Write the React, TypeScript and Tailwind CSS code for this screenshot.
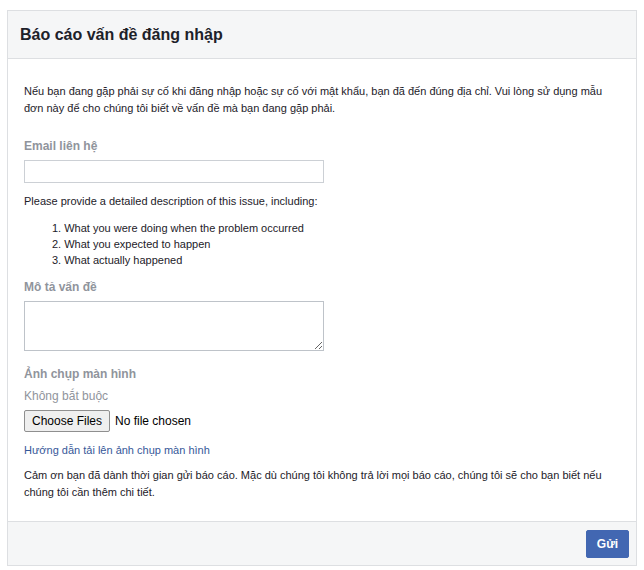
export default function App() {
  return (
    <div className="min-h-[570px] bg-white pt-[10px] pl-[7px] font-['Liberation_Sans',Arial,sans-serif] text-[#1d2129]">
      <div className="w-[630px] border border-[#dddfe2] bg-white">
        <div className="relative flex h-[48px] items-center border-b border-[#dddfe2] bg-[#f5f6f7] pl-[12px]">
          <h2 className="text-[16px] font-bold leading-5 text-[#1d2129]">Báo cáo vấn đề đăng nhập</h2>
        </div>

        <div className="px-[16px] pt-[24px] pb-[20px] text-[11px] leading-[17px]">
          <p>
            Nếu bạn đang gặp phải sự cố khi đăng nhập hoặc sự cố với mật khẩu, bạn đã đến đúng địa chỉ. Vui lòng sử dụng mẫu
            <br />
            đơn này để cho chúng tôi biết về vấn đề mà bạn đang gặp phải.
          </p>

          <div className="mt-[21px] text-[12px] font-bold leading-[17px] text-[#90949c]">Email liên hệ</div>
          <input className="mt-[5px] block h-[23px] w-[300px] border border-[#ccd0d5] bg-white px-1 outline-none" />

          <p className="mt-[10px]">Please provide a detailed description of this issue, including:</p>
          <ol className="mt-[10px] pl-[28px] leading-[16px]">
            <li>1. What you were doing when the problem occurred</li>
            <li>2. What you expected to happen</li>
            <li>3. What actually happened</li>
          </ol>

          <div className="mt-[11px] text-[12px] font-bold leading-[17px] text-[#90949c]">Mô tả vấn đề</div>
          <textarea className="mt-[5px] block h-[50px] w-[300px] border border-[#bec3c9] bg-white outline-none" />

          <div className="mt-[15px] text-[12px] font-bold leading-[17px] text-[#90949c]">Ảnh chụp màn hình</div>
          <div className="mt-[5px] text-[12px] leading-[17px] text-[#90949c]">Không bắt buộc</div>
          <div className="mt-[5px] flex items-center">
            <button className="h-[22px] w-[86px] rounded-[2px] border border-[#8f8f8f] bg-[#efefef] text-[12px] leading-none text-black">
              Choose Files
            </button>
            <span className="ml-[5px] text-[12px] text-black">No file chosen</span>
          </div>

          <a className="mt-[10px] block leading-[17px] text-[#365899]">Hướng dẫn tải lên ảnh chụp màn hình</a>

          <p className="mt-[8px]">
            Cảm ơn bạn đã dành thời gian gửi báo cáo. Mặc dù chúng tôi không trả lời mọi báo cáo, chúng tôi sẽ cho bạn biết nếu
            <br />
            chúng tôi cần thêm chi tiết.
          </p>
        </div>

        <div className="flex h-[44px] items-center justify-end border-t border-[#dddfe2] bg-[#f5f6f7] pr-[7px]">
          <button className="h-[28px] w-[43px] rounded-[2px] border border-[#4267b2] bg-[#4267b2] text-[12px] font-bold text-white">
            Gửi
          </button>
        </div>
      </div>
    </div>
  )
}
